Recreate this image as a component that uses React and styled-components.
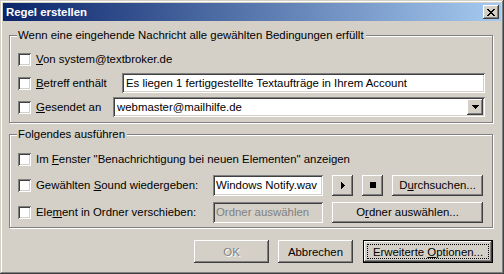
import React from "react";
import styled, { createGlobalStyle } from "styled-components";

const GlobalStyle = createGlobalStyle`
  html, body { margin: 0; padding: 0; background: #d4d0c8; }
  body {
    font-family: Tahoma, "Liberation Sans", Arial, sans-serif;
    font-size: 11.4px;
    color: #000;
  }
  u { text-decoration: underline; text-underline-offset: 1px; }
`;

const raised = `
  box-shadow: inset -1px -1px #404040, inset 1px 1px #ffffff,
    inset -2px -2px #808080, inset 2px 2px #d4d0c8;
`;

const sunken = `
  box-shadow: inset 1px 1px #808080, inset -1px -1px #ffffff,
    inset 2px 2px #404040, inset -2px -2px #d4d0c8;
`;

const Window = styled.div`
  box-sizing: border-box;
  width: 504px;
  height: 274px;
  padding: 3px;
  background: #d4d0c8;
  display: flex;
  flex-direction: column;
  box-shadow: inset -1px -1px #404040, inset 1px 1px #d4d0c8,
    inset -2px -2px #808080, inset 2px 2px #ffffff;
`;

const TitleBar = styled.div`
  height: 18px;
  display: flex;
  align-items: center;
  justify-content: space-between;
  padding: 0 2px 0 3px;
  background: linear-gradient(to right, #0a246a, #a6caf0);
  color: #fff;
  font-weight: bold;
`;

const CloseButton = styled.div`
  width: 16px;
  height: 14px;
  background: #d4d0c8;
  display: flex;
  align-items: center;
  justify-content: center;
  ${raised}
`;

const Body = styled.div`
  flex: 1;
  display: flex;
  flex-direction: column;
  padding: 14px 8px 0 6px;
`;

const Group = styled.div`
  position: relative;
  box-sizing: border-box;
  height: ${(p) => p.$height}px;
  margin-bottom: ${(p) => p.$gap || 0}px;
  padding: ${(p) => p.$top}px 7px 0 8px;
  border: 1px solid #808080;
  box-shadow: inset 1px 1px #ffffff, 1px 1px #ffffff;
  display: flex;
  flex-direction: column;
`;

const Legend = styled.span`
  position: absolute;
  top: -7px;
  left: 7px;
  line-height: 13px;
  padding: 0 2px 0 1px;
  background: #d4d0c8;
`;

const Row = styled.div`
  height: ${(p) => p.$h}px;
  display: flex;
  align-items: center;
`;

const CheckLabel = styled.label`
  display: flex;
  align-items: center;
  width: ${(p) => (p.$w ? `${p.$w}px` : "auto")};
  flex-shrink: 0;
  white-space: nowrap;
`;

const Box = styled.span`
  width: 13px;
  height: 13px;
  flex-shrink: 0;
  background: #fff;
  margin-right: 5px;
  ${sunken}
`;

const Field = styled.div`
  box-sizing: border-box;
  height: ${(p) => p.$h || 20}px;
  width: ${(p) => (p.$w ? `${p.$w}px` : "auto")};
  flex: ${(p) => (p.$w ? "none" : 1)};
  display: flex;
  align-items: center;
  padding: ${(p) => (p.$w ? "0 2px 0 3px" : "0 2px 0 4px")};
  background: ${(p) => (p.$disabled ? "#d4d0c8" : "#fff")};
  color: ${(p) => (p.$disabled ? "#808080" : "#000")};
  white-space: nowrap;
  overflow: hidden;
  ${sunken}
`;

const FieldText = styled.span`
  flex: 1;
  overflow: hidden;
`;

const DropButton = styled.span`
  width: 16px;
  height: 16px;
  flex-shrink: 0;
  background: #d4d0c8;
  display: flex;
  align-items: center;
  justify-content: center;
  ${raised}
`;

const Button = styled.div`
  box-sizing: border-box;
  width: ${(p) => p.$w}px;
  height: ${(p) => p.$h || 21}px;
  margin-left: ${(p) => p.$ml || 0}px;
  flex-shrink: 0;
  display: flex;
  align-items: center;
  justify-content: center;
  background: #d4d0c8;
  color: ${(p) => (p.$disabled ? "#808080" : "#000")};
  text-shadow: ${(p) => (p.$disabled ? "1px 1px #ffffff" : "none")};
  white-space: nowrap;
  ${raised}
`;

const DefaultButton = styled.div`
  box-sizing: border-box;
  width: ${(p) => p.$w}px;
  height: 23px;
  margin-left: ${(p) => p.$ml || 0}px;
  padding: 3px;
  display: flex;
  background: #d4d0c8;
  border: 1px solid #000;
  box-shadow: inset -1px -1px #404040, inset 1px 1px #ffffff,
    inset -2px -2px #808080;
`;

const FocusRing = styled.span`
  flex: 1;
  display: flex;
  align-items: center;
  justify-content: center;
  border: 1px dotted #000;
  white-space: pre;
`;

const Footer = styled.div`
  display: flex;
  justify-content: flex-end;
  margin-top: 12px;
`;

const CloseIcon = () => (
  <svg width="8" height="7" viewBox="0 0 8 7" shapeRendering="crispEdges">
    <path
      fill="#000"
      d="M0 0h2v1H0zM6 0h2v1H6zM1 1h2v1H1zM5 1h2v1H5zM2 2h4v1H2zM3 3h2v1H3zM2 4h4v1H2zM1 5h2v1H1zM5 5h2v1H5zM0 6h2v1H0zM6 6h2v1H6z"
    />
  </svg>
);

const Arrow = () => (
  <svg width="7" height="4" viewBox="0 0 7 4" shapeRendering="crispEdges">
    <path fill="#000" d="M0 0h7v1H0zM1 1h5v1H1zM2 2h3v1H2zM3 3h1v1H3z" />
  </svg>
);

const Play = () => (
  <svg width="4" height="7" viewBox="0 0 4 7" shapeRendering="crispEdges">
    <path fill="#000" d="M0 0h1v7H0zM1 1h1v5H1zM2 2h1v3H2zM3 3h1v1H3z" />
  </svg>
);

const Stop = () => (
  <svg width="6" height="6" viewBox="0 0 6 6">
    <rect width="6" height="6" fill="#000" />
  </svg>
);

const Check = ({ w, children }) => (
  <CheckLabel $w={w}>
    <Box />
    <span>{children}</span>
  </CheckLabel>
);

export default function App() {
  return (
    <>
      <GlobalStyle />
      <Window>
        <TitleBar>
          <span>Regel erstellen</span>
          <CloseButton>
            <CloseIcon />
          </CloseButton>
        </TitleBar>
        <Body>
          <Group $height={88} $top={11} $gap={11}>
            <Legend>Wenn eine eingehende Nachricht alle gewählten Bedingungen erfüllt</Legend>
            <Row $h={24}>
              <Check>
                <u>V</u>on system@textbroker.de
              </Check>
            </Row>
            <Row $h={24}>
              <Check w={104}>
                <u>B</u>etreff enthält
              </Check>
              <Field>
                <FieldText>Es liegen 1 fertiggestellte Textaufträge in Ihrem Account</FieldText>
              </Field>
            </Row>
            <Row $h={24}>
              <Check w={95}>
                <u>G</u>esendet an
              </Check>
              <Field>
                <FieldText>webmaster@mailhilfe.de</FieldText>
                <DropButton>
                  <Arrow />
                </DropButton>
              </Field>
            </Row>
          </Group>

          <Group $height={94} $top={12}>
            <Legend>Folgendes ausführen</Legend>
            <Row $h={24}>
              <Check>
                Im <u>F</u>enster "Benachrichtigung bei neuen Elementen" anzeigen
              </Check>
            </Row>
            <Row $h={28}>
              <Check w={195}>
                Gewählten <u>S</u>ound wiedergeben:
              </Check>
              <Field $w={110} $h={21}>
                <FieldText>Windows Notify.wav</FieldText>
              </Field>
              <Button $w={21} $ml={9}>
                <Play />
              </Button>
              <Button $w={21} $ml={9}>
                <Stop />
              </Button>
              <Button $w={91} $ml={9}>
                D<u>u</u>rchsuchen...
              </Button>
            </Row>
            <Row $h={26}>
              <Check w={195}>
                Ele<u>m</u>ent in Ordner verschieben:
              </Check>
              <Field $w={110} $h={21} $disabled>
                <FieldText>Ordner auswählen</FieldText>
              </Field>
              <Button $w={151} $ml={9}>
                O<u>r</u>dner auswählen...
              </Button>
            </Row>
          </Group>

          <Footer>
            <Button $w={75} $h={23} $disabled>
              OK
            </Button>
            <Button $w={75} $h={23} $ml={9}>
              Abbrechen
            </Button>
            <DefaultButton $w={130} $ml={10}>
              <FocusRing>
                Erweiterte{" "}<u>O</u>ptionen...
              </FocusRing>
            </DefaultButton>
          </Footer>
        </Body>
      </Window>
    </>
  );
}
